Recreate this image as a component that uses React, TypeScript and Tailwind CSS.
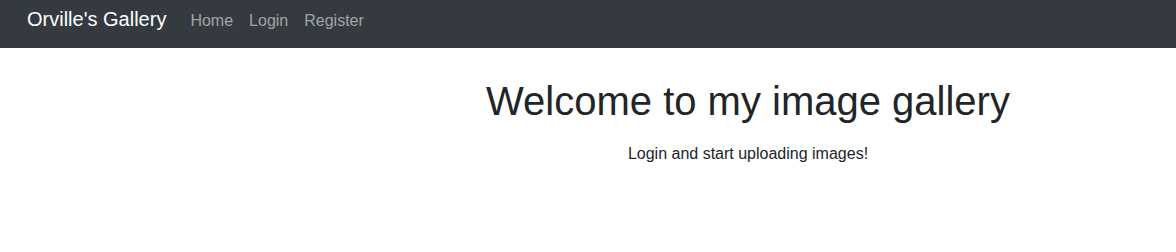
export default function App() {
  return (
    <div className="min-h-[252px] bg-white font-['Liberation_Sans',Arial,sans-serif] text-[#212529]">
      <nav className="flex h-12 items-baseline bg-[#343a40] pl-[27px] pt-[4px]">
        <span className="mr-6 text-[20px] leading-[30px] text-white">Orville's Gallery</span>
        <div className="flex gap-4 text-[16px] leading-6 text-[rgba(255,255,255,0.55)]">
          <span>Home</span>
          <span>Login</span>
          <span>Register</span>
        </div>
      </nav>
      <div className="grid grid-cols-[428px_640px_1fr]">
        <div />
        <div className="text-center">
          <h1 className="mt-[29px] text-[40px] leading-[48px]">Welcome to my image gallery</h1>
          <p className="mt-[17px] text-[16px] leading-6">Login and start uploading images!</p>
        </div>
      </div>
    </div>
  );
}
